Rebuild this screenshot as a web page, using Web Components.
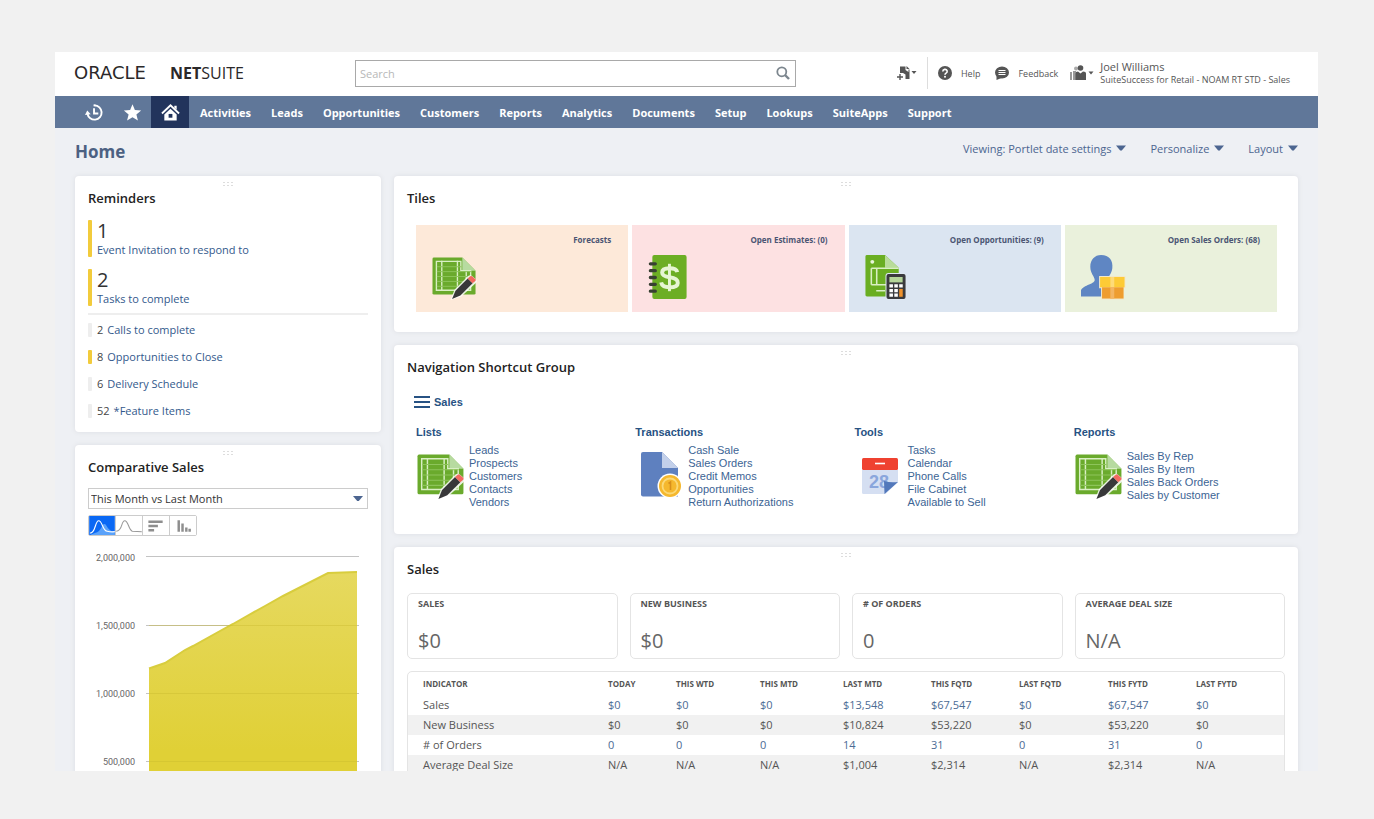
<!DOCTYPE html>
<html lang="en">
<head>
<meta charset="utf-8">
<meta name="viewport" content="width=device-width, initial-scale=1">
<title>Home - NetSuite</title>
<style>
  html, body { margin: 0; height: 100%; background: #f1f1f1; }
  body { font-family: "Open Sans", sans-serif; font-size: 11px; color: #555; }
</style>
</head>
<body>
<ns-app></ns-app>

<script>
const ICONS = {
  history: ['0 0 20 20', '<path d="M10 2.5a7.5 7.5 0 1 1-7.4 8.800" fill="none" stroke="#fff" stroke-width="2"/><path d="M9.500 5.500V11H14" fill="none" stroke="#fff" stroke-width="2"/><path d="M0 12.500 2.400 8l3.600 3.800z" fill="#fff"/><path d="M10 1.500v2" stroke="#fff" stroke-width="2"/>'],
  star: ['0 0 20 20', '<path d="M10 1.200l2.500 6.100 6.600.5-5 4.300 1.600 6.400-5.700-3.500-5.700 3.500 1.600-6.400-5-4.300 6.600-.5z" fill="#fff"/>'],
  home: ['0 0 20 20', '<path d="M14 3h2.500v4l-2.500-2z" fill="#fff"/><path d="M1 11 10 2.500 19 11" fill="none" stroke="#fff" stroke-width="2"/><path d="M3.500 12 10 6l6.500 6v6.500h-13z" fill="#fff"/><path d="M8 11.500h4v4H8z" fill="#22345c"/>'],
  search: ['0 0 14 14', '<circle cx="5.800" cy="5.800" r="4.500" fill="none" stroke="#7c868e" stroke-width="1.800"/><path d="M9 9l4 4" stroke="#7c868e" stroke-width="2.400"/>'],
  add: ['0 0 20 16', '<path d="M3 1.500h5.500V5l3 2V4.500h1V14H8.500V9.500L6 8H3z" fill="#555"/><path d="M9.500 1l3 3h-3z" fill="#555"/><path d="M0 12h6M3 9v6" stroke="#555" stroke-width="1.400"/><path d="M14.500 6h5L17 9z" fill="#555"/>'],
  help: ['0 0 14 14', '<circle cx="7" cy="7" r="7" fill="#555"/><path d="M4.800 5.400a2.200 2 0 1 1 3.300 1.700C7.300 7.600 7 7.900 7 8.700" fill="none" stroke="#fff" stroke-width="1.600"/><circle cx="7" cy="10.700" r="1" fill="#fff"/>'],
  chat: ['0 0 14 14', '<ellipse cx="7" cy="6.500" rx="7" ry="6" fill="#555"/><path d="M1.500 9v5l5-2z" fill="#555"/><path d="M3.500 4.500h7M3.500 6.500h7M3.500 8.500h7" stroke="#fff"/>'],
  people: ['0 0 24 16', '<circle cx="6" cy="3.500" r="2" fill="#aaa"/><path d="M3 6h3v9H3zM0 7h2v8H0z" fill="#999"/><circle cx="10.500" cy="3" r="2.800" fill="#555"/><path d="M5.500 15V8.500q0-2 2.500-2l2.500 2 2.500-2q3 0 3 2V15z" fill="#555"/><path d="M18.500 6.500h5L21 9.500z" fill="#555"/>'],
  caret: ['0 0 10 6', '<path d="M0 .5h10L5.800 5.500H4.200z" fill="#4c6590"/>'],
  menu: ['0 0 16 14', '<path d="M0 2h16M0 7h16M0 12h16" stroke="#275283" stroke-width="2"/>'],
  sheet: ['0 0 46 46', '<path d="M2 2.500H31L44.500 16V39q0 1.500-1.500 1.500H2Q.5 40.500.5 39V4Q.5 2.500 2 2.500z" fill="#6aaa2c"/><path d="M31 2.500 44.500 16H31z" fill="#b7dba0"/><path d="M4.500 6.500h25V16h10v20h-35z" fill="none" stroke="#d9efc4" stroke-width="1.400"/><path d="M10 6v30M26 6v30M35 16v20" stroke="#d9efc4" stroke-width="1.400"/><path d="M5 12h25M5 17h35M5 22h35M5 27h35M5 32h35" stroke="#8dc45a" stroke-width="1"/><path d="M19 46l4-10.500 14-14q2-1.500 4 0l4 3.500q1.500 2-.5 4L30 42.500z" fill="#fff" opacity=".85"/><path d="M20.500 45l3.500-8.500L36.500 24l5 5L29 41.500z" fill="#38383a"/><path d="M36.500 24l2.500-2.300q1-.7 2 0l3.300 3q.8 1 0 2L41.500 29z" fill="#f26a60"/>'],
  ledger: ['0 0 40 46', '<rect x="4" width="35" height="45" rx="2" fill="#6cae24"/><path d="M2 9h5M2 16h5M2 23h5M2 30h5M2 37h5" stroke="#384032" stroke-width="3.400" stroke-linecap="round"/><path d="M29.500 17.500q-1-4-8-4-7.500 0-7.500 4.500 0 3.800 7.500 4.800 8.500 1 8.500 5.700 0 4.500-8.500 4.500-7.500 0-8.500-5" fill="none" stroke="#e6f5d3" stroke-width="4"/><path d="M21.500 9v28" stroke="#e6f5d3" stroke-width="3"/>'],
  calculator: ['0 0 42 46', '<path d="M1.500 0H20l14 13v29.500H1.500Q0 42.500 0 41V1.500Q0 0 1.500 0z" fill="#6aae22"/><path d="M20 0l14 13H20z" fill="#b9dc9a"/><circle cx="7" cy="7" r="2" fill="#e7f5d9"/><path d="M6 13.500h28M6 30.500h16M6 13.500v17M11.500 13.500v17M11 36.500h9" fill="none" stroke="#d9efc4" stroke-width="1.600"/><rect x="20.500" y="18.500" width="21.500" height="27.500" rx="3" fill="#dfe8f2"/><rect x="21.500" y="19.500" width="19.500" height="25.500" rx="2" fill="#3a3a3d"/><path d="M24.500 22.500h13.500V28H24.500z" fill="#b5d69a"/><path d="M24.500 30h3.600v3.300h-3.600zM29.500 30h3.600v3.300h-3.600zM34.500 30h3.600v3.300h-3.600zM24.500 34.700h3.600V38h-3.600zM29.500 34.700h3.600V38h-3.600zM24.500 39.400h3.600v3.300h-3.600zM29.500 39.400h3.600v3.300h-3.600z" fill="#fff"/><path d="M34.500 34.700h3.600v8h-3.600z" fill="#f0922d"/>'],
  customer: ['0 0 46 46', '<path d="M20.500 0C29 0 33 6 32 13.500 31.500 19 27 23 27 26c0 4 9 4 12 9l-5 7.500H0V37c0-6 14-7 14-11.500C14 22 9.500 19 9.500 12 9.500 5 14 0 20.500 0z" fill="#5f86c3"/><path d="M18.500 21.500h27V34H44v11.500H20.500V34h-2z" fill="#f3e8c8"/><path d="M19.500 22.500h25V33h-25z" fill="#fdcb36"/><path d="M21.500 33H43.500v11.500h-22z" fill="#ee9d2f"/><path d="M30 22.500h4V33h-4z" fill="#fedb78"/><path d="M30 33h4v11.500h-4z" fill="#f3b562"/>'],
  invoice: ['0 0 42 48', '<path d="M2 0h19l16 16v28.500H2Q0 44.500 0 42.500V2Q0 0 2 0z" fill="#5e80bf"/><path d="M21 0l16 16H21z" fill="#c3d0ea"/><circle cx="29" cy="34" r="12.500" fill="#fff"/><circle cx="29" cy="34" r="11" fill="#f5b82e"/><circle cx="29" cy="34" r="7.500" fill="none" stroke="#fbd977" stroke-width="1.800"/><path d="M27.500 31.500l2-1.500v8" fill="none" stroke="#d88f1c" stroke-width="1.600"/>'],
  calendar: ['0 0 36 36', '<rect width="36" height="12" rx="1.500" fill="#ef4130"/><path d="M13 5.500h10" stroke="#fff" stroke-width="1.600"/><path d="M0 12h36v12L23.500 36H1.500Q0 36 0 34.500z" fill="#d5dff2"/><text x="7" y="30" font-family="Liberation Sans, sans-serif" font-weight="700" font-size="18" fill="#8aa6dc">28</text><path d="M22.500 36l-.5-13q6 2 14 1z" fill="#5278bb"/>'],
  area: ['0 0 27 20', '<path fill="#0a68f4" d="M0 0h27v20H0z"/><path d="M6 18q5-1 8-8 2-3 4 0 3 6 9 7v3H1z" fill="#5aa2fa"/><path d="M1 18c6 0 5-13 9-13s4 11 9 11q4 1 8 .5" fill="none" stroke="#fff" stroke-width="1.200"/>'],
  line: ['0 0 27 20', '<path d="M0 16c7 0 5-11 9-11s4 10 8 11l10 .5" fill="none" stroke="#999" stroke-width="1.100"/>'],
  hbars: ['0 0 27 20', '<path d="M5.500 6h15M5.500 10.500h10M5.500 15h6" stroke="#8e8e8e" stroke-width="2.600"/>'],
  vbars: ['0 0 27 20', '<path d="M9 4.500v12M13 8v8.500M17 12v4.500M20.500 13.500v3" stroke="#8e8e8e" stroke-width="2.600"/>']
};

/* Defines an element whose open shadow root holds its own styles and markup. */
function define(name, css, render) {
  customElements.define(name, class extends HTMLElement {
    connectedCallback() {
      if (this.shadowRoot) return;
      const template = document.createElement('template');
      template.innerHTML = `<style>*,*::before{box-sizing:border-box}:host{display:block;box-sizing:border-box}${css}</style>${render(this)}`;
      this.attachShadow({ mode: 'open' }).append(template.content.cloneNode(true));
    }
  });
}

define('ns-icon', `
  :host { display: block; flex: none; }
  svg { display: block; width: 100%; height: 100%; }
`, el => {
  const [box, art] = ICONS[el.getAttribute('name')];
  return `<svg viewBox="${box}" aria-hidden="true">${art}</svg>`;
});

define('ns-header', `
  :host { display: grid; grid-template-columns: 281px minmax(200px, 441px) 1fr; align-items: center;
    height: 44px; padding: 0 28px 2px 19px; background: #fff; }
  .logo { display: flex; align-items: baseline; color: #2b2829; text-decoration: none; line-height: 20px; }
  .oracle { font: 18px/20px "DejaVu Sans", sans-serif; width: 96px; }
  .suite { font-size: 16px; }
  .suite b { font-weight: 700; }
  form { display: flex; align-items: center; height: 27px; border: 1px solid #a9a9a9; padding-right: 5px; }
  input { flex: 1; min-width: 0; border: 0; outline: 0; padding: 0 4px; font: 11px "Open Sans", sans-serif; color: #555; background: none; }
  input::placeholder { color: #b8b8b8; opacity: 1; }
  button { display: flex; align-items: center; border: 0; padding: 0; background: none; color: inherit; font: inherit; }
  form ns-icon { width: 14px; height: 14px; }
  .tools { display: flex; align-items: center; justify-content: flex-end; font-size: 9px; white-space: nowrap; }
  .add { width: 20px; height: 16px; }
  .round { width: 14px; height: 14px; }
  .rule { width: 1px; height: 32px; margin: 0 10px; background: #ddd; }
  .help { gap: 9px; margin-right: 15px; }
  .chat { gap: 9px; margin-right: 12px; }
  .user { gap: 6px; text-align: left; }
  .user ns-icon { width: 24px; height: 16px; }
  .user b, .user small { display: block; font-weight: 400; }
  .user b { font-size: 11px; line-height: 14px; }
  .user small { font-size: 9px; line-height: 12px; }
`, () => `
  <a class="logo" href="#"><span class="oracle">ORACLE</span><span class="suite"><b>NET</b>SUITE</span></a>
  <form role="search">
    <input type="search" placeholder="Search" aria-label="Search">
    <button type="button" aria-label="Run search"><ns-icon name="search"></ns-icon></button>
  </form>
  <div class="tools">
    <button type="button" aria-label="Create new"><ns-icon class="add" name="add"></ns-icon></button>
    <span class="rule"></span>
    <button type="button" class="help"><ns-icon class="round" name="help"></ns-icon>Help</button>
    <button type="button" class="chat"><ns-icon class="round" name="chat"></ns-icon>Feedback</button>
    <button type="button" class="user"><ns-icon name="people"></ns-icon>
      <span><b>Joel Williams</b><small>SuiteSuccess for Retail - NOAM RT STD - Sales</small></span></button>
  </div>`);

define('ns-nav', `
  nav { display: flex; height: 32px; padding-left: 20px; background: #607799; }
  a { display: flex; align-items: center; color: #fff; font-size: 11px; font-weight: 700; text-decoration: none; margin-right: 20px; white-space: nowrap; }
  .icon { width: 38px; justify-content: center; margin-right: 0; }
  .icon ns-icon { width: 19px; height: 19px; }
  .active { background: #22345c; margin-right: 11px; }
`, () => `<nav aria-label="Main">
  <a class="icon" href="#" aria-label="Recent records"><ns-icon name="history"></ns-icon></a>
  <a class="icon" href="#" aria-label="Shortcuts"><ns-icon name="star"></ns-icon></a>
  <a class="icon active" href="#" aria-label="Home"><ns-icon name="home"></ns-icon></a>
  ${['Activities', 'Leads', 'Opportunities', 'Customers', 'Reports', 'Analytics', 'Documents', 'Setup', 'Lookups', 'SuiteApps', 'Support']
    .map(t => `<a href="#">${t}</a>`).join('')}</nav>`);

define('ns-toolbar', `
  :host { display: flex; justify-content: space-between; height: 48px; padding: 0 20px; }
  h1 { margin: 13px 0 0; font-size: 17px; line-height: 22px; color: #4c6182; }
  div { display: flex; align-items: center; gap: 24px; height: 40px; }
  button { display: flex; align-items: center; gap: 5px; border: 0; padding: 0; background: none; color: #4c6590; font: 11px "Open Sans", sans-serif; }
  ns-icon { width: 10px; height: 6px; }
`, () => `<h1>Home</h1><div>
  ${['Viewing: Portlet date settings', 'Personalize', 'Layout'].map(t => `<button type="button">${t}<ns-icon name="caret"></ns-icon></button>`).join('')}</div>`);

define('ns-portlet', `
  :host { background: #fff; border-radius: 4px; box-shadow: 0 0 5px #dcdee2; padding: 5px 13px 0; }
  .grip { display: block; width: 12px; height: 6px; margin: 0 auto;
    background: radial-gradient(circle, #ddd 1px, transparent 1px) 0 0 / 4px 3px; }
  h2 { margin: 1px 0 0; font: 600 13px/20px "Open Sans", sans-serif; color: #222; }
`, el => `<span class="grip"></span><h2>${el.getAttribute('heading')}</h2><slot></slot>`);

define('ns-reminder', `
  :host { display: flex; align-items: center; height: 27px; font-size: 11px; color: #444; }
  :host::before { content: ""; width: 4px; height: 14px; border-radius: 1px; background: #eee; margin-right: 5px; }
  :host([alert])::before { background: #f2cb3c; }
  a { color: #33598c; text-decoration: none; margin-left: 4px; font-weight: 500; }
  span { font-weight: 500; }
  :host([large]) { height: 37px; margin-bottom: 12px; }
  :host([large])::before { height: 37px; }
  :host([large]) span { display: block; font-size: 20px; line-height: 22px; color: #333; }
  :host([large]) a { display: block; margin: 0; line-height: 15px; }
`, el => `<div><span>${el.getAttribute('count')}</span><a href="#"><slot></slot></a></div>`);

define('ns-reminders', `
  :host { padding: 12px 0 8px; }
  hr { border: 0; height: 2px; margin: -5px 0 1px; background: #eee; }
`, () => `
  <ns-reminder large alert count="1">Event Invitation to respond to</ns-reminder>
  <ns-reminder large alert count="2">Tasks to complete</ns-reminder>
  <hr>
  <ns-reminder count="2">Calls to complete</ns-reminder>
  <ns-reminder alert count="8">Opportunities to Close</ns-reminder>
  <ns-reminder count="6">Delivery Schedule</ns-reminder>
  <ns-reminder count="52">*Feature Items</ns-reminder>`);

define('ns-comparison', `
  :host { padding-top: 11px; }
  label { display: block; position: relative; }
  select { display: block; appearance: none; width: 100%; height: 21px; border: 1px solid #ccc; border-radius: 0; padding: 0 2px;
    background: #fff; color: #333; font: 500 11px "Open Sans", sans-serif; }
  label ns-icon { position: absolute; right: 5px; top: 7px; width: 10px; height: 7px; pointer-events: none; }
  .types { display: flex; width: 109px; height: 21px; margin-top: 6px; border: 1px solid #ccc; border-radius: 2px; }
  .types button { flex: 1; min-width: 0; padding: 0; border: 0; background: #fff; overflow: hidden; }
  .types button + button { border-left: 1px solid #ccc; }
  .types ns-icon { height: 19px; }
  .chart { display: flex; margin-top: 12px; padding-right: 9px; font: 9px/20px Roboto, sans-serif; color: #666; }
  ol { list-style: none; margin: 0; padding: 0; width: 58px; padding-right: 11px; text-align: right; }
  li { height: 68px; }
  .chart svg { display: block; flex: 1; min-width: 0; height: 272px; margin-top: 8px; }
`, () => `
  <label><select aria-label="Comparison period"><option>This Month vs Last Month</option></select><ns-icon name="caret"></ns-icon></label>
  <div class="types">
    ${[['area', 'Area'], ['line', 'Line'], ['hbars', 'Bar'], ['vbars', 'Column']].map(([i, t]) => `<button type="button" aria-label="${t} chart"><ns-icon name="${i}"></ns-icon></button>`).join('')}
  </div>
  <div class="chart">
    <ol><li>2,000,000</li><li>1,500,000</li><li>1,000,000</li><li>500,000</li></ol>
    <svg viewBox="0 0 213 272" preserveAspectRatio="none" aria-label="Sales this month">
      <defs><linearGradient id="fill" x1="0" y1="0" x2="0" y2="1"><stop offset="0" stop-color="#e6d95f"/><stop offset=".7" stop-color="#e0d036"/></linearGradient></defs>
      <path d="M0 .5h213M0 69.500h213M0 137.500h213M0 205.500h213" stroke="#c4c4c4"/>
      <path d="M3 113L19 107 39 94 47 90 74 75 87 68 101 60 119 50 137 40 182 17 211 16V272H3z" fill="url(#fill)"/>
      <path d="M3 112.500L19 107 39 94 47 90 74 75 87 68 101 60 119 50 137 40 182 17 211 16" fill="none" stroke="#d8cd3e" stroke-width="2"/>
      <path d="M3 69.500h208M3 137.500h208M3 205.500h208" stroke="#c9ba2e" opacity=".4"/>
    </svg>
  </div>`);

define('ns-tile', `
  a { display: block; height: 87px; padding: 9px 17px 0 16px; background: var(--tile); color: #4b5573; text-decoration: none; }
  span { display: block; text-align: right; font-size: 8px; font-weight: 700; line-height: 12px; }
  ns-icon { width: 45px; height: 45px; margin-top: 9px; }
  :host([icon=ledger]) ns-icon { width: 40px; }
  :host([icon=calculator]) ns-icon { width: 42px; }
`, el => `<a href="#"><span><slot></slot></span><ns-icon name="${el.getAttribute('icon')}"></ns-icon></a>`);

define('ns-tiles', `
  :host { display: grid; grid-template-columns: repeat(4, 1fr); gap: 4px; padding: 17px 8px 20px 9px; }
`, () => `
  <ns-tile icon="sheet" style="--tile:#fde9d9">Forecasts</ns-tile>
  <ns-tile icon="ledger" style="--tile:#fde1e2">Open Estimates: (0)</ns-tile>
  <ns-tile icon="calculator" style="--tile:#dbe5f1">Open Opportunities: (9)</ns-tile>
  <ns-tile icon="customer" style="--tile:#eaf1dc">Open Sales Orders: (68)</ns-tile>`);

define('ns-shortcut', `
  h4 { margin: 0 0 4px; font-size: 11px; line-height: 13px; color: #275283; }
  div { display: grid; grid-template-columns: 53px 1fr; align-items: center; height: 66px; }
  ns-icon { width: 48px; height: 48px; margin-left: 1px; }
  :host([icon=invoice]) ns-icon { width: 42px; margin-left: 6px; }
  :host([icon=calendar]) ns-icon { width: 36px; height: 36px; margin-left: 7px; }
  ul { list-style: none; margin: 0; padding: 0; }
  a { color: #3c6494; text-decoration: none; line-height: 13px; display: block; }
`, el => `<h4>${el.getAttribute('heading')}</h4><div><ns-icon name="${el.getAttribute('icon')}"></ns-icon><ul>
  ${el.getAttribute('links').split(',').map(t => `<li><a href="#">${t}</a></li>`).join('')}</ul></div>`);

define('ns-shortcuts', `
  :host { padding: 17px 0 25px 7px; font: 11px/13px "Liberation Sans", Arial, sans-serif; }
  h3 { display: flex; align-items: center; gap: 4px; margin: 0 0 16px; font-size: 11px; line-height: 16px; color: #275283; }
  h3 ns-icon { width: 16px; height: 14px; }
  div { display: grid; grid-template-columns: repeat(4, 1fr); column-gap: 8px; padding-left: 2px; }
`, () => `<h3><ns-icon name="menu"></ns-icon>Sales</h3><div>
  <ns-shortcut heading="Lists" icon="sheet" links="Leads,Prospects,Customers,Contacts,Vendors"></ns-shortcut>
  <ns-shortcut heading="Transactions" icon="invoice" links="Cash Sale,Sales Orders,Credit Memos,Opportunities,Return Authorizations"></ns-shortcut>
  <ns-shortcut heading="Tools" icon="calendar" links="Tasks,Calendar,Phone Calls,File Cabinet,Available to Sell"></ns-shortcut>
  <ns-shortcut heading="Reports" icon="sheet" links="Sales By Rep,Sales By Item,Sales Back Orders,Sales by Customer"></ns-shortcut></div>`);

define('ns-kpi', `
  :host { height: 66px; border: 1px solid #e4e4e4; border-radius: 5px; padding: 4px 10px 0; }
  h3 { margin: 0; font-size: 9px; line-height: 12px; color: #555; }
  p { margin: 17px 0 0; font-size: 20px; line-height: 28px; color: #666; }
`, el => `<h3>${el.getAttribute('label')}</h3><p>${el.getAttribute('value')}</p>`);

define('ns-indicators', `
  :host { border: 1px solid #e4e4e4; border-radius: 5px 5px 0 0; margin-top: 12px; }
  table { width: 100%; table-layout: fixed; border-collapse: collapse; font-size: 11px; line-height: 14px; color: #555; }
  th, td { padding: 0 0 0 15px; text-align: left; white-space: nowrap; }
  thead th { height: 23px; font-size: 8px; font-weight: 700; }
  tbody th { font-weight: 400; }
  tbody tr { height: 20px; }
  tbody tr:nth-child(even) { background: #f1f1f1; }
  a { color: #4c6b94; text-decoration: none; }
`, () => {
  const head = [['INDICATOR', 185], ['TODAY', 68], ['THIS WTD', 84], ['THIS MTD', 83], ['LAST MTD', 88], ['THIS FQTD', 88], ['LAST FQTD', 89], ['THIS FYTD', 88], ['LAST FYTD', 103]];
  const rows = [
    ['Sales', '$0', '$0', '$0', '$13,548', '$67,547', '$0', '$67,547', '$0'],
    ['New Business', '$0', '$0', '$0', '$10,824', '$53,220', '$0', '$53,220', '$0'],
    ['# of Orders', '0', '0', '0', '14', '31', '0', '31', '0'],
    ['Average Deal Size', 'N/A', 'N/A', 'N/A', '$1,004', '$2,314', 'N/A', '$2,314', 'N/A']
  ];
  return `<table><colgroup>${head.map(h => `<col style="width:${h[1]}px">`).join('')}</colgroup>
    <thead><tr>${head.map(h => `<th scope="col">${h[0]}</th>`).join('')}</tr></thead>
    <tbody>${rows.map((r, i) => `<tr><th scope="row">${r[0]}</th>${r.slice(1).map(v => `<td>${i % 2 ? v : `<a href="#">${v}</a>`}</td>`).join('')}</tr>`).join('')}</tbody></table>`;
});

define('ns-sales', `
  :host { padding-top: 14px; }
  div { display: grid; grid-template-columns: repeat(4, 1fr); gap: 12px; }
`, () => `<div>
  <ns-kpi label="SALES" value="$0"></ns-kpi><ns-kpi label="NEW BUSINESS" value="$0"></ns-kpi>
  <ns-kpi label="# OF ORDERS" value="0"></ns-kpi><ns-kpi label="AVERAGE DEAL SIZE" value="N/A"></ns-kpi></div>
  <ns-indicators></ns-indicators>`);

define('ns-app', `
  :host { padding: 52px 56px 48px 55px; height: 100vh; }
  .window { height: 100%; overflow: hidden; background: #eef0f4; }
  main { display: grid; grid-template-columns: 306px minmax(0, 1fr); gap: 13px; padding: 0 20px; }
  .column { display: flex; flex-direction: column; gap: 13px; min-width: 0; }
`, () => `<div class="window">
  <ns-header></ns-header><ns-nav></ns-nav><ns-toolbar></ns-toolbar>
  <main>
    <div class="column">
      <ns-portlet heading="Reminders"><ns-reminders></ns-reminders></ns-portlet>
      <ns-portlet heading="Comparative Sales"><ns-comparison></ns-comparison></ns-portlet>
    </div>
    <div class="column">
      <ns-portlet heading="Tiles"><ns-tiles></ns-tiles></ns-portlet>
      <ns-portlet heading="Navigation Shortcut Group"><ns-shortcuts></ns-shortcuts></ns-portlet>
      <ns-portlet heading="Sales"><ns-sales></ns-sales></ns-portlet>
    </div>
  </main></div>`);
</script>
</body>
</html>
